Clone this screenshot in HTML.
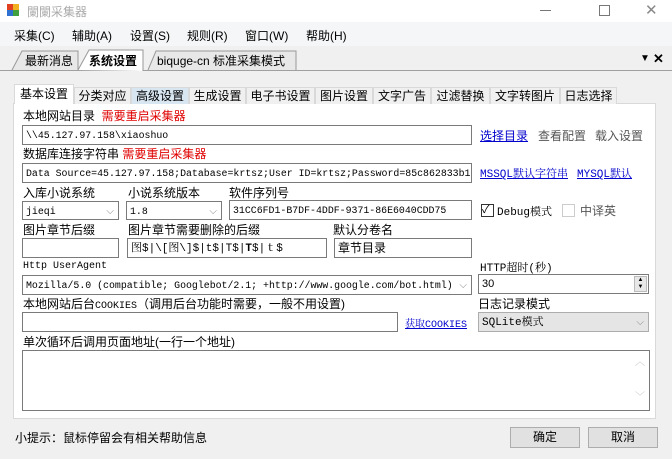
<!DOCTYPE html>
<html><head><meta charset="utf-8"><style>
*{margin:0;padding:0;box-sizing:border-box}
body{width:672px;height:459px;background:#f0f0f0;position:relative;overflow:hidden;font-family:"Liberation Sans","Noto Sans CJK SC",sans-serif;font-size:12px;color:#000}
.a{position:absolute;white-space:nowrap}
.tb{position:absolute;background:#fff;border:1px solid #7a7a7a;font-family:"Liberation Mono","Noto Serif CJK SC",monospace;font-size:9.9px;padding:3px 3px 1px;white-space:nowrap;overflow:hidden;line-height:14px}
.red{color:#e00000}
.lk{color:#0000cc;text-decoration:underline;font-family:"Liberation Mono","Noto Serif CJK SC",monospace;font-size:11px}
.gr{color:#555}
.cv{position:absolute;right:4px;top:3px;color:#888;font-size:10px;font-family:"DejaVu Sans",sans-serif}
.it{position:absolute;top:87px;height:17px;font-size:12px;line-height:16px;text-align:center;border:1px solid #d9d9d9;border-bottom:none;background:#f0f0f0}
.btn{position:absolute;background:#e1e1e1;border:1px solid #adadad;text-align:center;line-height:18px;font-size:12px}
.cb{position:absolute;width:13px;height:13px;border:1px solid #333;background:#fff}
.m{font-family:"Liberation Mono","Noto Serif CJK SC",monospace;font-size:11px}
</style></head><body>
<div class="a" style="left:0;top:0;width:672px;height:22px;background:#fff"></div>
<div class="a" style="left:7px;top:4px;width:6px;height:6px;background:#e04020"></div>
<div class="a" style="left:13px;top:4px;width:6px;height:6px;background:#f0b020"></div>
<div class="a" style="left:7px;top:10px;width:6px;height:6px;background:#3070d0"></div>
<div class="a" style="left:13px;top:10px;width:6px;height:6px;background:#40a040"></div>
<div class="a" style="left:27px;top:3px;color:#aaa">闌闌采集器</div>
<div class="a" style="left:540px;top:10px;width:11px;height:1px;background:#777"></div>
<div class="a" style="left:599px;top:5px;width:11px;height:11px;border:1px solid #777"></div>
<div class="a" style="left:645px;top:1px;color:#888;font-size:15px">✕</div>
<div class="a" style="left:0;top:22px;width:672px;height:24px;background:#f5f6f7"></div>
<div class="a" style="left:14px;top:27px">采集(C)</div>
<div class="a" style="left:72px;top:27px">辅助(A)</div>
<div class="a" style="left:130px;top:27px">设置(S)</div>
<div class="a" style="left:187px;top:27px">规则(R)</div>
<div class="a" style="left:245px;top:27px">窗口(W)</div>
<div class="a" style="left:306px;top:27px">帮助(H)</div>
<div class="a" style="left:0;top:70px;width:672px;height:1px;background:#a0a0a0"></div>
<svg class="a" style="left:0;top:48px" width="300" height="23"><path d="M12 22 L22 3 L78 3 L78 22" fill="#e8e8e8" stroke="#999"/><path d="M78 22 L89 2 L143 2 L143 23" fill="#fff" stroke="#999"/><path d="M148 22 L156 3 L296 3 L296 22" fill="#e8e8e8" stroke="#999"/></svg>
<div class="a" style="left:25px;top:52px">最新消息</div>
<div class="a" style="left:89px;top:52px;font-weight:bold">系统设置</div>
<div class="a" style="left:157px;top:52px">biquge-cn 标准采集模式</div>
<div class="a" style="left:640px;top:53px;font-size:10px">▼</div>
<div class="a" style="left:653px;top:51px;font-size:13px;font-weight:bold">✕</div>
<div class="a" style="left:13px;top:103px;width:643px;height:316px;background:#fff;border:1px solid #d9d9d9"></div>
<div class="it" style="left:14px;top:84px;width:60px;height:20px;background:#fff;line-height:19px">基本设置</div>
<div class="it" style="left:74px;width:57px">分类对应</div>
<div class="it" style="left:131px;width:58px;background:#d8e6f2">高级设置</div>
<div class="it" style="left:189px;width:57px">生成设置</div>
<div class="it" style="left:246px;width:69px">电子书设置</div>
<div class="it" style="left:315px;width:58px">图片设置</div>
<div class="it" style="left:373px;width:58px">文字广告</div>
<div class="it" style="left:431px;width:59px">过滤替换</div>
<div class="it" style="left:490px;width:70px">文字转图片</div>
<div class="it" style="left:560px;width:57px">日志选择</div>
<div class="a" style="left:23px;top:107px">本地网站目录 <span class="red">&nbsp;需要重启采集器</span></div>
<div class="tb" style="left:22px;top:125px;width:450px;height:20px">\\45.127.97.158\xiaoshuo</div>
<div class="a lk" style="left:480px;top:127px;font-family:'Liberation Sans','Noto Sans CJK SC',sans-serif;font-size:12px">选择目录</div>
<div class="a gr" style="left:538px;top:127px">查看配置</div>
<div class="a gr" style="left:595px;top:127px">载入设置</div>
<div class="a" style="left:23px;top:145px">数据库连接字符串 <span class="red">需要重启采集器</span></div>
<div class="tb" style="left:22px;top:163px;width:450px;height:20px">Data Source=45.127.97.158;Database=krtsz;User ID=krtsz;Password=85c862833b11</div>
<div class="a lk" style="left:480px;top:165px">MSSQL默认字符串</div>
<div class="a lk" style="left:577px;top:165px">MYSQL默认</div>
<div class="a" style="left:23px;top:184px">入库小说系统</div>
<div class="a" style="left:128px;top:184px">小说系统版本</div>
<div class="a" style="left:229px;top:184px">软件序列号</div>
<div class="tb" style="left:22px;top:201px;width:97px;height:19px">jieqi<span class="cv">⌵</span></div>
<div class="tb" style="left:126px;top:201px;width:96px;height:19px">1.8<span class="cv">⌵</span></div>
<div class="tb" style="left:229px;top:200px;width:243px;height:20px">31CC6FD1-B7DF-4DDF-9371-86E6040CDD75</div>
<div class="cb" style="left:481px;top:204px"></div>
<div class="a" style="left:482px;top:201px;font-size:11px">✓</div>
<div class="a m" style="left:497px;top:203px">Debug模式</div>
<div class="cb" style="left:562px;top:204px;border-color:#ccc"></div>
<div class="a gr" style="left:580px;top:202px">中译英</div>
<div class="a" style="left:23px;top:221px">图片章节后缀</div>
<div class="a" style="left:128px;top:221px">图片章节需要删除的后缀</div>
<div class="a" style="left:333px;top:221px">默认分卷名</div>
<div class="tb" style="left:22px;top:238px;width:97px;height:20px"></div>
<div class="tb" style="left:127px;top:238px;width:200px;height:20px;font-size:11px">图$|\[图\]$|t$|T$|<b>T</b>$|ｔ$</div>
<div class="tb" style="left:334px;top:238px;width:138px;height:20px;font-family:'Liberation Sans','Noto Sans CJK SC',sans-serif;font-size:12px;padding-top:2px">章节目录</div>
<div class="a m" style="left:23px;top:261px;font-size:10px">Http UserAgent</div>
<div class="a m" style="left:480px;top:259px">HTTP超时(秒)</div>
<div class="tb" style="left:22px;top:275px;width:450px;height:20px">Mozilla/5.0 (compatible; Googlebot/2.1; +http://www.google.com/bot.html)<span class="cv">⌵</span></div>
<div class="tb" style="left:478px;top:274px;width:171px;height:20px;font-family:'Liberation Sans',sans-serif;font-size:11px;padding-top:2px">30<span class="a" style="right:1px;top:1px;width:13px;height:16px;background:#e8e8e8;border:1px solid #bbb;font-size:6px;line-height:7px;text-align:center">▲<br>▼</span></div>
<div class="a" style="left:23px;top:295px">本地网站后台<span class="m" style="font-size:10px">COOKIES</span>（调用后台功能时需要，一般不用设置)</div>
<div class="a" style="left:478px;top:295px">日志记录模式</div>
<div class="tb" style="left:22px;top:312px;width:376px;height:20px"></div>
<div class="a lk" style="left:405px;top:315px;font-size:10px">获取COOKIES</div>
<div class="tb" style="left:478px;top:312px;width:171px;height:20px;background:#e5e5e5;border-color:#adadad;font-size:11px">SQLite模式<span class="cv">⌵</span></div>
<div class="a" style="left:23px;top:333px">单次循环后调用页面地址(一行一个地址)</div>
<div class="tb" style="left:22px;top:350px;width:628px;height:61px"><span class="a" style="right:4px;top:6px;color:#bbb;font-size:10px">︿</span><span class="a" style="right:4px;bottom:4px;color:#bbb;font-size:10px">﹀</span></div>
<div class="a" style="left:15px;top:429px">小提示：鼠标停留会有相关帮助信息</div>
<div class="btn" style="left:510px;top:427px;width:70px;height:21px">确定</div>
<div class="btn" style="left:588px;top:427px;width:70px;height:21px">取消</div>
</body></html>
